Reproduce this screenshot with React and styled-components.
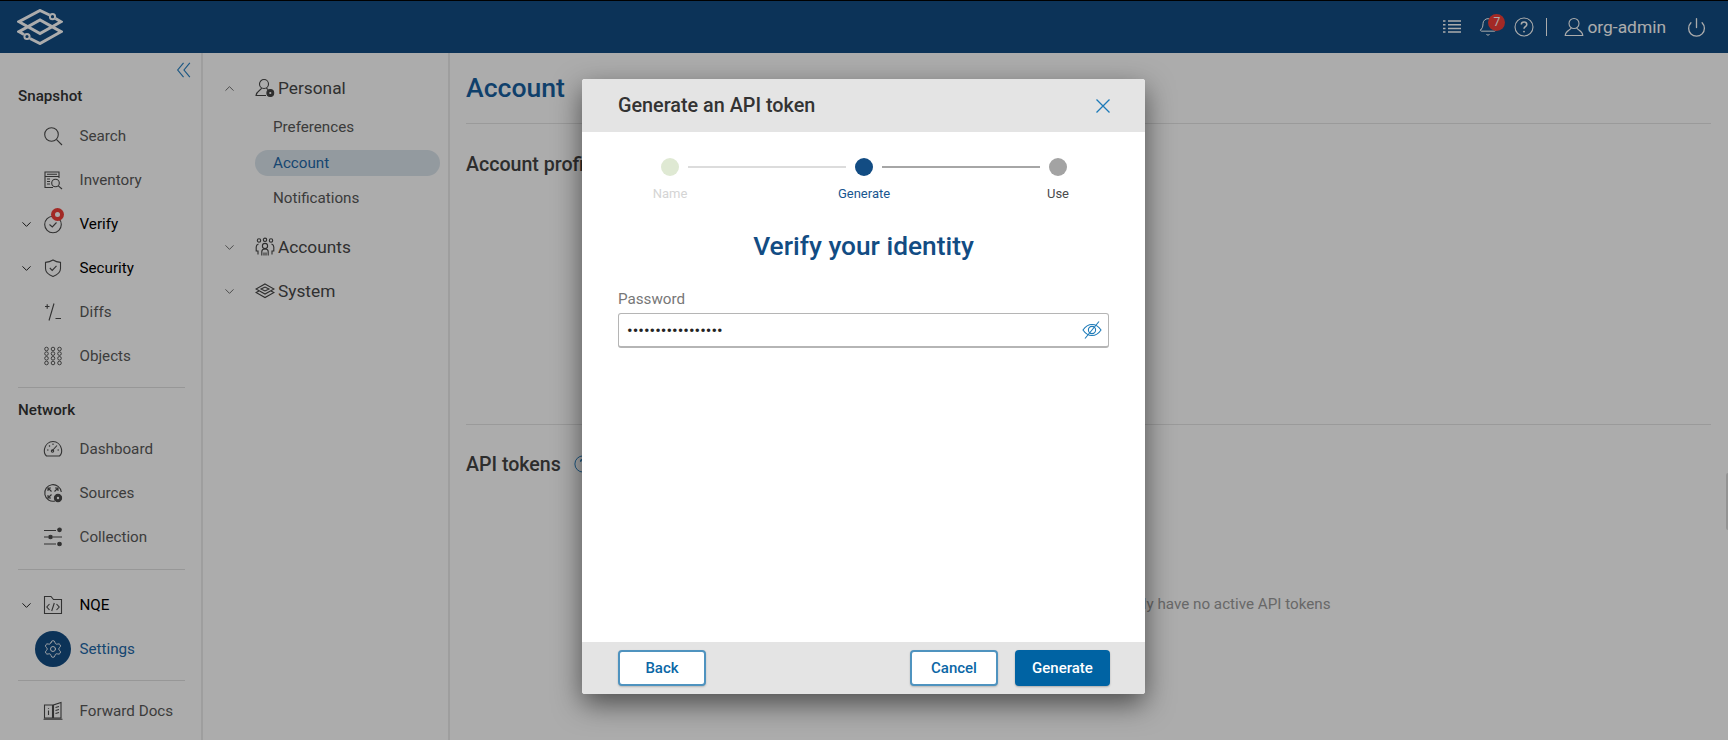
import React from "react";
import styled, { createGlobalStyle } from "styled-components";
import {
  ChevronDown,
  ChevronUp,
  Bell,
  Power,
  Settings as Gear,
} from "lucide-react";

const GlobalStyle = createGlobalStyle`
  html, body { margin: 0; padding: 0; height: 100%; overflow: hidden; background: #fff; }
  body { font-family: Roboto, "Liberation Sans", sans-serif; }
  * { box-sizing: border-box; }
`;

const Svg = styled.svg.attrs({ viewBox: "0 0 20 20", fill: "none", stroke: "currentColor" })`
  width: ${(p) => p.$size || 20}px;
  height: ${(p) => p.$size || 20}px;
  stroke-width: ${(p) => p.$stroke || 1.1};
  flex: none;
`;

const Logo = () => (
  <LogoSvg viewBox="0 0 46 36" fill="none" stroke="currentColor" strokeWidth="3">
    <path d="M32.5 6 L23 1.5 L2 12.7 L23 24.5 L44 12.7 L38.5 9.5" />
    <path d="M13 29.5 L23 34.5 L44 22.7 L23 11 L2 22.7 L7 25.5" />
    <circle cx="35.5" cy="7.7" r="2.6" strokeWidth="2" />
    <circle cx="10" cy="27.5" r="2.6" strokeWidth="2" />
  </LogoSvg>
);

const SearchIcon = () => (
  <Svg><circle cx="8.5" cy="8.5" r="6.8" /><path d="M13.6 13.6 L19 19" /></Svg>
);
const InventoryIcon = () => (
  <Svg>
    <path d="M16 8 V2 H2 V17.5 H10" />
    <path d="M2 6.5 H16 M4 4.3 H14 M4 9 H7 M4 11.5 H7 M4 14 H7" />
    <circle cx="12.5" cy="13" r="3.8" />
    <path d="M15.3 15.8 L19 19" />
  </Svg>
);
const VerifyIcon = () => (
  <Svg><circle cx="10" cy="10.5" r="8.3" /><path d="M6.5 10.5 L9.3 13 L13.5 8.5" /></Svg>
);
const ShieldIcon = () => (
  <Svg>
    <path d="M10 2 C12.5 3.6 14.5 4.2 17.5 4.4 V10.5 C17.5 14.2 14.5 16.8 10 18.5 C5.5 16.8 2.5 14.2 2.5 10.5 V4.4 C5.5 4.2 7.5 3.6 10 2 Z" />
    <path d="M6.8 10 L9.2 12.4 L13.5 7.8" />
  </Svg>
);
const DiffsIcon = () => (
  <Svg>
    <path d="M2 4.5 H6.5 M4.2 2.3 V6.7 M11 1.5 L6 18.5 M12.5 16.5 H18" />
  </Svg>
);
const ObjectsIcon = () => (
  <Svg $stroke={0.9}>
    {[3.5, 10, 16.5].map((x) =>
      [3, 7.6, 12.3, 17].map((y) => <circle key={`${x}-${y}`} cx={x} cy={y} r="1.8" />)
    )}
  </Svg>
);
const GaugeIcon = () => (
  <Svg>
    <path d="M3.5 17 C1.2 15 1 12.5 1.5 10 C2.5 5.5 6 2.5 10 2.5 C14 2.5 17.5 5.5 18.5 10 C19 12.5 18.8 15 16.5 17 Z" />
    <path d="M9 12 L14 6.5 M4 11 H5.5 M6 6.5 L7 7.5 M10 4.5 V6 M14.5 11 H16" />
    <circle cx="9.5" cy="12" r="1.2" />
  </Svg>
);
const SourcesIcon = () => (
  <Svg>
    <path d="M12 18 A8.3 8.3 0 1 1 18.3 9" />
    <path d="M5 5 L8.5 8.5 M5 8 V5 H8 M15 5 L11.5 8.5 M15 8 V5 H12 M5 15 L8.5 11.5 M5 12 V15 H8" />
    <circle cx="15" cy="15" r="3.6" fill="currentColor" />
    <circle cx="15" cy="15" r="1.2" fill="#fff" stroke="none" />
  </Svg>
);
const SlidersIcon = () => (
  <Svg>
    <path d="M1 3.5 H13 M1 10 H5 M10 10 H19 M1 17 H13" />
    <circle cx="16.5" cy="2.8" r="1.8" fill="currentColor" />
    <circle cx="7.5" cy="10" r="1.8" fill="currentColor" />
    <circle cx="16.5" cy="17" r="1.8" fill="currentColor" />
  </Svg>
);
const FolderCodeIcon = () => (
  <Svg>
    <path d="M1.5 18.5 V1.5 H8 L10.5 4.5 H18.5 V18.5 Z" />
    <path d="M6.5 9 L3.8 12 L6.5 15 M13.5 9 L16.2 12 L13.5 15 M11.3 8 L8.7 16" />
  </Svg>
);
const DocsIcon = () => (
  <Svg>
    <path d="M1.5 4 H9.5 V17 H1.5 Z M10.5 17 V4 L18 1.5 V17 Z M0.5 18.2 H19.5" />
    <path d="M5.5 7 V7.8 M5.5 9.5 V14 M12.5 6.5 L16 5.5 M12.5 9.5 L16 8.5 M12.5 12.5 L16 11.5" />
  </Svg>
);
const PersonalIcon = () => (
  <Svg>
    <circle cx="9" cy="6" r="4.5" />
    <path d="M6.5 10 C6.5 12 1.5 13 1 17.5 H11" />
    <path d="M11.5 10 C11.8 10.7 12.5 11.2 13 11.5" />
    <circle cx="15.3" cy="15" r="3.4" fill="currentColor" />
    <circle cx="15.3" cy="15" r="1.1" fill="#fff" stroke="none" />
  </Svg>
);
const AccountsIcon = () => (
  <Svg>
    <circle cx="4" cy="3.5" r="1.7" />
    <circle cx="10" cy="2.8" r="1.7" />
    <circle cx="16" cy="3.5" r="1.7" />
    <circle cx="10" cy="9" r="2.6" />
    <path d="M6.8 18.5 V14.5 C6.8 12.8 8 12 10 12 C12 12 13.2 12.8 13.2 14.5 V18.5 M9 18.5 V15.5 M11 18.5 V15.5" />
    <path d="M3.5 7 C2 7.5 1.2 8.5 1.2 10 V14 H3 V17.5 M16.5 7 C18 7.5 18.8 8.5 18.8 10 V14 H17 V17.5" />
  </Svg>
);
const LayersIcon = () => (
  <Svg>
    <path d="M10 3 L19 8 L10 13 L1 8 Z" />
    <path d="M4 10 L1 11.5 L10 16.5 L19 11.5 L16 10" />
    <path d="M6 8 L10 6 L14 8 L10 10 Z" />
  </Svg>
);
const ListIcon = () => (
  <Svg>
    <path d="M6 4 H19 M6 7.7 H19 M6 11.4 H19 M6 15 H19" strokeWidth="1.5" />
    <path d="M1 4 H3.5 M1 7.7 H3.5 M1 11.4 H3.5 M1 15 H3.5" strokeWidth="1.5" />
  </Svg>
);
const HelpIcon = ({ size }) => (
  <Svg $size={size}>
    <circle cx="10" cy="10" r="9" />
    <path d="M7.3 7.6 C7.3 6 8.5 5 10 5 C11.6 5 12.8 6 12.8 7.5 C12.8 9.6 10 9.7 10 11.8" strokeWidth="1.5" />
    <circle cx="10" cy="14.6" r="0.9" fill="currentColor" stroke="none" />
  </Svg>
);
const UserIcon = () => (
  <Svg>
    <circle cx="10" cy="6.5" r="5" />
    <path d="M7.2 10.7 C7.2 13 1.5 13.5 1.2 18.5 H18.8 C18.5 13.5 12.8 13 12.8 10.7" />
  </Svg>
);
const EyeOffIcon = () => (
  <Svg $size={20}>
    <path d="M1 10 C3.5 6.3 6.5 4.5 10 4.5 C13.5 4.5 16.5 6.3 19 10 C16.5 13.7 13.5 15.5 10 15.5 C6.5 15.5 3.5 13.7 1 10 Z" />
    <circle cx="10" cy="10" r="3.6" />
    <path d="M17 1.5 L3 18.5" />
  </Svg>
);
const CloseIcon = () => (
  <Svg $stroke={1.3}><path d="M3.5 3.5 L16.5 16.5 M16.5 3.5 L3.5 16.5" /></Svg>
);
const CollapseIcon = () => (
  <Svg $size={18} $stroke={1.3}><path d="M9.5 2 L3 10 L9.5 18 M16.5 2 L10 10 L16.5 18" /></Svg>
);

const primaryNav = [
  {
    label: "Snapshot",
    items: [
      { name: "Search", icon: <SearchIcon /> },
      { name: "Inventory", icon: <InventoryIcon /> },
      { name: "Verify", icon: <VerifyIcon />, expandable: true, alert: true },
      { name: "Security", icon: <ShieldIcon />, expandable: true },
      { name: "Diffs", icon: <DiffsIcon /> },
      { name: "Objects", icon: <ObjectsIcon /> },
    ],
  },
  {
    label: "Network",
    items: [
      { name: "Dashboard", icon: <GaugeIcon /> },
      { name: "Sources", icon: <SourcesIcon /> },
      { name: "Collection", icon: <SlidersIcon /> },
    ],
  },
];

const NavRow = ({ item }) => (
  <NavItem>
    <Caret>{item.expandable && <ChevronDown size={15} strokeWidth={1.6} />}</Caret>
    <NavIcon $active={item.active}>
      {item.icon}
      {item.alert && <AlertDot />}
    </NavIcon>
    <NavText $strong={item.expandable} $active={item.active}>{item.name}</NavText>
  </NavItem>
);

const App = () => {
  return (
    <Page>
      <GlobalStyle />
      <Header>
        <Logo />
        <HeaderTools>
          <HeaderIcon><ListIcon /></HeaderIcon>
          <HeaderIcon $left={16}>
            <Bell size={20} strokeWidth={1.2} />
            <Badge>7</Badge>
          </HeaderIcon>
          <HeaderIcon $left={16}><HelpIcon /></HeaderIcon>
          <ToolDivider />
          <UserBlock>
            <UserIcon />
            <span>org-admin</span>
          </UserBlock>
          <HeaderIcon $left={20}><Power size={21} strokeWidth={1.5} /></HeaderIcon>
        </HeaderTools>
      </Header>

      <Body>
        <Sidebar>
          <Collapse><CollapseIcon /></Collapse>
          {primaryNav.map((section, i) => (
            <React.Fragment key={section.label}>
              <GroupLabel>{section.label}</GroupLabel>
              {section.items.map((item) => <NavRow key={item.name} item={item} />)}
              <SideDivider $top={i === 0 ? 9 : 10} />
            </React.Fragment>
          ))}
          <NqeGroup>
            <NavRow item={{ name: "NQE", icon: <FolderCodeIcon />, expandable: true }} />
            <NavRow item={{ name: "Settings", icon: <Gear size={20} strokeWidth={1.1} />, active: true }} />
          </NqeGroup>
          <SideDivider $top={9} />
          <DocsGroup>
            <NavRow item={{ name: "Forward Docs", icon: <DocsIcon /> }} />
          </DocsGroup>
        </Sidebar>

        <SubNav>
          <SubGroup>
            <SubCaret><ChevronUp size={15} strokeWidth={1.2} /></SubCaret>
            <PersonalIcon />
            <span>Personal</span>
          </SubGroup>
          <SubList>
            <SubItem>Preferences</SubItem>
            <SubItem $active>Account</SubItem>
            <SubItem>Notifications</SubItem>
          </SubList>
          <SubGroup>
            <SubCaret><ChevronDown size={15} strokeWidth={1.2} /></SubCaret>
            <AccountsIcon />
            <span>Accounts</span>
          </SubGroup>
          <SubGroup>
            <SubCaret><ChevronDown size={15} strokeWidth={1.2} /></SubCaret>
            <LayersIcon />
            <span>System</span>
          </SubGroup>
        </SubNav>

        <Main>
          <PageTitle>Account</PageTitle>
          <ProfileSection>
            <SectionTitle>Account profile</SectionTitle>
          </ProfileSection>
          <TokensSection>
            <SectionTitle>
              API tokens
              <TitleHelp><HelpIcon size={18} /></TitleHelp>
            </SectionTitle>
            <EmptyText>You currently have no active API tokens</EmptyText>
          </TokensSection>
        </Main>
      </Body>
      <EdgeTab />

      <Overlay>
        <Modal>
          <ModalHeader>
            <ModalTitle>Generate an API token</ModalTitle>
            <CloseButton><CloseIcon /></CloseButton>
          </ModalHeader>
          <ModalBody>
            <Stepper>
              <Step>
                <StepDot $color="#dfe9d3" />
                <StepLabel $color="#d4d4d4">Name</StepLabel>
              </Step>
              <StepLine $color="#dcdcdc" />
              <Step>
                <StepDot $color="#124c83" />
                <StepLabel $color="#19568f">Generate</StepLabel>
              </Step>
              <StepLine $color="#a6a6a6" />
              <Step>
                <StepDot $color="#a3a3a3" />
                <StepLabel $color="#4a4a4a">Use</StepLabel>
              </Step>
            </Stepper>
            <Heading>Verify your identity</Heading>
            <FieldLabel>Password</FieldLabel>
            <PasswordBox>
              <PasswordInput type="password" readOnly value="abcdefghijklmnopq" />
              <EyeButton><EyeOffIcon /></EyeButton>
            </PasswordBox>
          </ModalBody>
          <ModalFooter>
            <OutlineButton>Back</OutlineButton>
            <FooterRight>
              <OutlineButton>Cancel</OutlineButton>
              <PrimaryButton>Generate</PrimaryButton>
            </FooterRight>
          </ModalFooter>
        </Modal>
      </Overlay>
    </Page>
  );
};

export default App;

const Page = styled.div`
  position: relative;
  width: 1728px;
  height: 740px;
  overflow: hidden;
  display: flex;
  flex-direction: column;
  background: #fff;
`;
const Header = styled.header`
  height: 53px;
  flex: none;
  display: flex;
  align-items: center;
  justify-content: space-between;
  background: #124c83;
  border-top: 1px solid #000;
  padding: 0 21px 0 17px;
  color: #fff;
`;
const LogoSvg = styled.svg`
  width: 46px;
  height: 36px;
`;
const HeaderTools = styled.div`
  display: flex;
  align-items: center;
`;
const HeaderIcon = styled.div`
  position: relative;
  display: flex;
  margin-left: ${(p) => p.$left || 0}px;
`;
const Badge = styled.span`
  position: absolute;
  top: -3px;
  left: 10px;
  width: 17px;
  height: 17px;
  border-radius: 50%;
  background: #f03e38;
  color: #fff;
  font-size: 12px;
  line-height: 17px;
  text-align: center;
`;
const ToolDivider = styled.div`
  width: 1px;
  height: 18px;
  background: #fff;
  margin: 0 17px 0 12px;
`;
const UserBlock = styled.div`
  display: flex;
  align-items: center;
  gap: 3px;
  font-size: 17.4px;
`;
const Body = styled.div`
  flex: 1;
  display: flex;
  min-height: 0;
`;
const Sidebar = styled.nav`
  width: 203px;
  flex: none;
  padding: 7px 0 0 18px;
  border-right: 2px solid #ebebeb;
`;
const Collapse = styled.div`
  display: flex;
  justify-content: flex-end;
  height: 20px;
  padding: 1px 8px 0 0;
  color: #2a83c4;
`;
const GroupLabel = styled.div`
  height: 24px;
  line-height: 24px;
  margin: 4px 0 6px;
  font-size: 15.2px;
  font-weight: 500;
  color: #333;
  hr + & {
    margin: 10px 0 5px;
  }
`;
const NavItem = styled.div`
  display: flex;
  align-items: center;
  height: 44px;
`;
const Caret = styled.div`
  width: 17px;
  display: flex;
  justify-content: center;
  color: #222;
`;
const NavIcon = styled.div`
  position: relative;
  width: 36px;
  height: 36px;
  margin-right: 8.5px;
  display: flex;
  align-items: center;
  justify-content: center;
  border-radius: 50%;
  color: ${(p) => (p.$active ? "#fff" : "#4a4a4a")};
  background: ${(p) => (p.$active ? "#124c83" : "transparent")};
`;
const AlertDot = styled.span`
  position: absolute;
  top: 2px;
  left: 16px;
  width: 13px;
  height: 13px;
  border-radius: 50%;
  background: #f03e38;
  &::after {
    content: "";
    position: absolute;
    top: 4px;
    left: 4px;
    width: 5px;
    height: 5px;
    border-radius: 50%;
    background: #fff;
  }
`;
const NavText = styled.span`
  font-size: 15.2px;
  color: ${(p) => (p.$active ? "#2368a8" : p.$strong ? "#000" : "#5a5a5a")};
`;
const SideDivider = styled.hr`
  border: 0;
  height: 1px;
  background: #e0e0e0;
  margin: ${(p) => p.$top}px 0 0;
  width: 167px;
`;
const NqeGroup = styled.div`
  margin-top: 13px;
`;
const DocsGroup = styled.div`
  margin-top: 8px;
`;
const SubNav = styled.nav`
  width: 247px;
  flex: none;
  padding-top: 13px;
  border-right: 2px solid #ebebeb;
`;
const SubGroup = styled.div`
  display: flex;
  align-items: center;
  height: 44px;
  font-size: 17.3px;
  color: #484848;
  svg {
    color: #444;
  }
  > span {
    margin-left: 3px;
  }
`;
const SubCaret = styled.div`
  width: 52px;
  display: flex;
  justify-content: center;
`;
const SubList = styled.div`
  display: flex;
  flex-direction: column;
  gap: 9.5px;
  padding-left: 52px;
  margin: 4px 0 14px;
`;
const SubItem = styled.div`
  width: 185px;
  height: 26px;
  line-height: 26px;
  padding-left: 18px;
  font-size: 15.2px;
  border-radius: 13px;
  color: ${(p) => (p.$active ? "#2368a8" : "#585858")};
  background: ${(p) => (p.$active ? "#dae4ec" : "transparent")};
`;
const Main = styled.main`
  flex: 1;
  padding: 13px 17px 0 16px;
  min-width: 0;
`;
const PageTitle = styled.h1`
  margin: 0;
  height: 58px;
  padding-top: 6px;
  line-height: 32px;
  font-size: 26.6px;
  font-weight: 500;
  color: #17609f;
  border-bottom: 1px solid #e4e4e4;
`;
const ProfileSection = styled.section`
  height: 301px;
  padding-top: 27px;
  border-bottom: 1px solid #e4e4e4;
`;
const TokensSection = styled.section`
  padding-top: 26px;
`;
const SectionTitle = styled.h2`
  margin: 0;
  display: flex;
  align-items: center;
  height: 26px;
  font-size: 19.6px;
  font-weight: 500;
  color: #444;
`;
const TitleHelp = styled.span`
  display: flex;
  margin-left: 13px;
  color: #2a83c4;
`;
const EmptyText = styled.p`
  margin: 117px 0 0;
  padding-left: 219px;
  text-align: center;
  font-size: 15.2px;
  line-height: 20px;
  color: #9a9a9a;
`;
const EdgeTab = styled.div`
  position: absolute;
  right: 0;
  top: 473px;
  width: 2px;
  height: 57px;
  border-radius: 2px 0 0 2px;
  background: #dcdcdc;
`;
const Overlay = styled.div`
  position: absolute;
  inset: 0;
  display: flex;
  justify-content: center;
  align-items: flex-start;
  padding: 79px 1px 0 0;
  background: rgba(0, 0, 0, 0.325);
`;
const Modal = styled.div`
  width: 563px;
  height: 615px;
  display: flex;
  flex-direction: column;
  border-radius: 3px;
  background: #fff;
  overflow: hidden;
  box-shadow: 0 10px 28px rgba(0, 0, 0, 0.55);
`;
const ModalHeader = styled.div`
  height: 53px;
  flex: none;
  display: flex;
  align-items: center;
  justify-content: space-between;
  padding: 0 36px;
  background: #e4e4e4;
`;
const ModalTitle = styled.div`
  font-size: 19.8px;
  font-weight: 500;
  color: #333;
`;
const CloseButton = styled.div`
  display: flex;
  margin-right: -4px;
  color: #1c7ab8;
`;
const ModalBody = styled.div`
  flex: 1;
  padding: 26px 36px 0;
`;
const Stepper = styled.div`
  width: 406px;
  margin-left: 43px;
  display: flex;
  align-items: flex-start;
`;
const Step = styled.div`
  width: 18px;
  display: flex;
  flex-direction: column;
  align-items: center;
`;
const StepDot = styled.span`
  width: 18px;
  height: 18px;
  flex: none;
  border-radius: 50%;
  background: ${(p) => p.$color};
`;
const StepLabel = styled.span`
  margin-top: 10px;
  font-size: 13px;
  line-height: 16px;
  white-space: nowrap;
  color: ${(p) => p.$color};
`;
const StepLine = styled.span`
  flex: 1;
  height: 2px;
  margin: 8px 9px 0;
  background: ${(p) => p.$color};
`;
const Heading = styled.h2`
  margin: 28px 0 0;
  text-align: center;
  font-size: 26.3px;
  line-height: 32px;
  font-weight: 500;
  color: #124c83;
`;
const FieldLabel = styled.label`
  display: block;
  margin-top: 28px;
  font-size: 15.2px;
  line-height: 18px;
  color: #777;
`;
const PasswordBox = styled.div`
  position: relative;
  margin-top: 5px;
  height: 35px;
  display: flex;
  align-items: center;
  border: 1px solid #b5b5b5;
  border-bottom-width: 2px;
  border-radius: 3px;
  background: #fff;
`;
const PasswordInput = styled.input`
  flex: 1;
  border: 0;
  outline: 0;
  height: 100%;
  padding: 0 8px;
  background: transparent;
  font-family: Roboto, sans-serif;
  font-size: 16.7px;
  color: #222;
`;
const EyeButton = styled.div`
  display: flex;
  margin-right: 6px;
  color: #1c7ab8;
`;
const ModalFooter = styled.div`
  height: 52px;
  flex: none;
  display: flex;
  align-items: center;
  justify-content: space-between;
  padding: 0 35px 0 36px;
  background: #e4e4e4;
`;
const FooterRight = styled.div`
  display: flex;
  gap: 17px;
`;
const OutlineButton = styled.button`
  width: 88px;
  height: 36px;
  padding: 0;
  border: 2px solid #4f93bf;
  border-radius: 4px;
  background: #fff;
  color: #0b67a6;
  font-family: inherit;
  font-size: 15px;
  font-weight: 500;
  box-shadow: 0 1px 2px rgba(0, 0, 0, 0.2);
`;
const PrimaryButton = styled.button`
  width: 95px;
  height: 36px;
  padding: 0;
  border: 0;
  border-radius: 4px;
  background: #0063a3;
  color: #fff;
  font-family: inherit;
  font-size: 15px;
  font-weight: 500;
  box-shadow: 0 1px 2px rgba(0, 0, 0, 0.25);
`;
